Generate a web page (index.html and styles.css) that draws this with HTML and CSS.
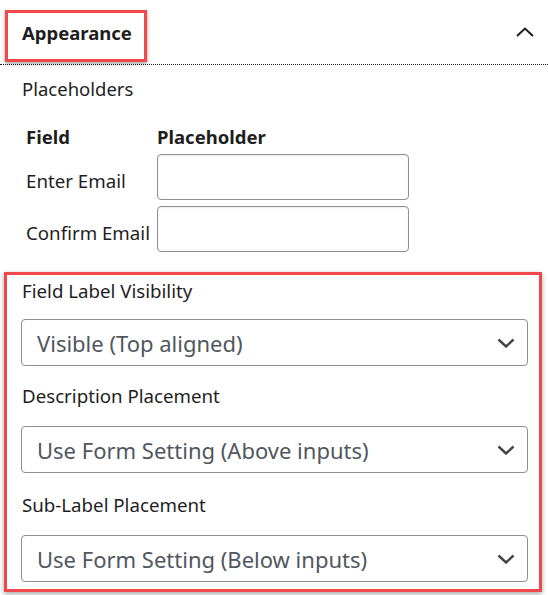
FILE: index.html
```html
<!DOCTYPE html>
<html>
<head>
<meta charset="utf-8">
<link rel="stylesheet" href="styles.css">
</head>
<body>
<div class="panel">
  <div class="panel-header">
    <div class="title-box"><span class="title">Appearance</span></div>
    <svg class="chev-up" width="18" height="10" viewBox="0 0 18 10"><path d="M1 9 L9 1.5 L17 9" fill="none" stroke="#1e1e1e" stroke-width="2"/></svg>
  </div>
  <div class="section">
    <div class="section-label">Placeholders</div>
    <div class="ph-table">
      <div class="th th-field">Field</div>
      <div class="th">Placeholder</div>
      <div class="td">Enter Email</div>
      <div class="input"></div>
      <div class="td">Confirm Email</div>
      <div class="input"></div>
    </div>
  </div>
  <div class="highlight">
    <div class="group group-1">
      <div class="label">Field Label Visibility</div>
      <div class="select"><span>Visible (Top aligned)</span><svg class="chev" width="18" height="10" viewBox="0 0 18 10"><path d="M1.5 1.5 L9 8.5 L16.5 1.5" fill="none" stroke="#444" stroke-width="2.4"/></svg></div>
    </div>
    <div class="group group-2">
      <div class="label">Description Placement</div>
      <div class="select"><span>Use Form Setting (Above inputs)</span><svg class="chev" width="18" height="10" viewBox="0 0 18 10"><path d="M1.5 1.5 L9 8.5 L16.5 1.5" fill="none" stroke="#444" stroke-width="2.4"/></svg></div>
    </div>
    <div class="group">
      <div class="label">Sub-Label Placement</div>
      <div class="select"><span>Use Form Setting (Below inputs)</span><svg class="chev" width="18" height="10" viewBox="0 0 18 10"><path d="M1.5 1.5 L9 8.5 L16.5 1.5" fill="none" stroke="#444" stroke-width="2.4"/></svg></div>
    </div>
  </div>
</div>
</body>
</html>
```
FILE: styles.css
```css
* { box-sizing: border-box; }
html, body { margin: 0; padding: 0; background: #fff; }
body {
  font-family: "Noto Sans", "Open Sans", sans-serif;
  color: #1e1e1e;
  width: 548px;
  height: 595px;
  overflow: hidden;
}
.panel-header {
  height: 65px;
  border-bottom: 1px dotted #1e1e1e;
  display: flex;
  align-items: flex-start;
  justify-content: space-between;
  padding-top: 10px;
  padding-left: 5px;
  padding-right: 14px;
}
.title-box {
  width: 142px;
  height: 52px;
  border: 3px solid #f2474b;
  box-shadow: 0 2px 4px rgba(0,0,0,0.35);
  padding-left: 14px;
  padding-top: 8px;
}
.title {
  font-weight: 700;
  font-size: 18.5px;
  line-height: 24px;
}
.chev-up { margin-top: 17px; }
.section { padding-left: 22px; padding-top: 12px; }
.section-label { font-size: 18.5px; line-height: 24px; }
.ph-table {
  display: grid;
  grid-template-columns: 131px 252px;
  row-gap: 6px;
  margin-top: 25px;
  margin-left: 4px;
  align-items: center;
}
.th { font-weight: 700; font-size: 18.5px; line-height: 22px; margin-bottom: 0; }
.td { font-size: 18.7px; padding-top: 6px; }
.input {
  height: 46px;
  border: 1px solid #8c8f94;
  border-radius: 4px;
  box-shadow: inset 0 1px 2px rgba(0,0,0,0.07);
}
.highlight {
  margin-top: 20px;
  margin-left: 4px;
  width: 538px;
  height: 320px;
  border: 3px solid #f2474b;
  box-shadow: 0 2px 5px rgba(0,0,0,0.35);
  padding: 4px 11px 0 14px;
}
.group { margin-bottom: 20px; }
.group-1 { margin-bottom: 18px; }
.label { font-size: 18.7px; line-height: 24px; margin-left: 1px; margin-bottom: 18px; }
.group-1 .label { margin-bottom: 16px; }
.select {
  height: 47px;
  border: 1px solid #8c8f94;
  border-radius: 4px;
  display: flex;
  align-items: center;
  justify-content: space-between;
  padding-left: 15px;
  padding-right: 12px;
  font-size: 22px;
  color: #50575e;
}
```
